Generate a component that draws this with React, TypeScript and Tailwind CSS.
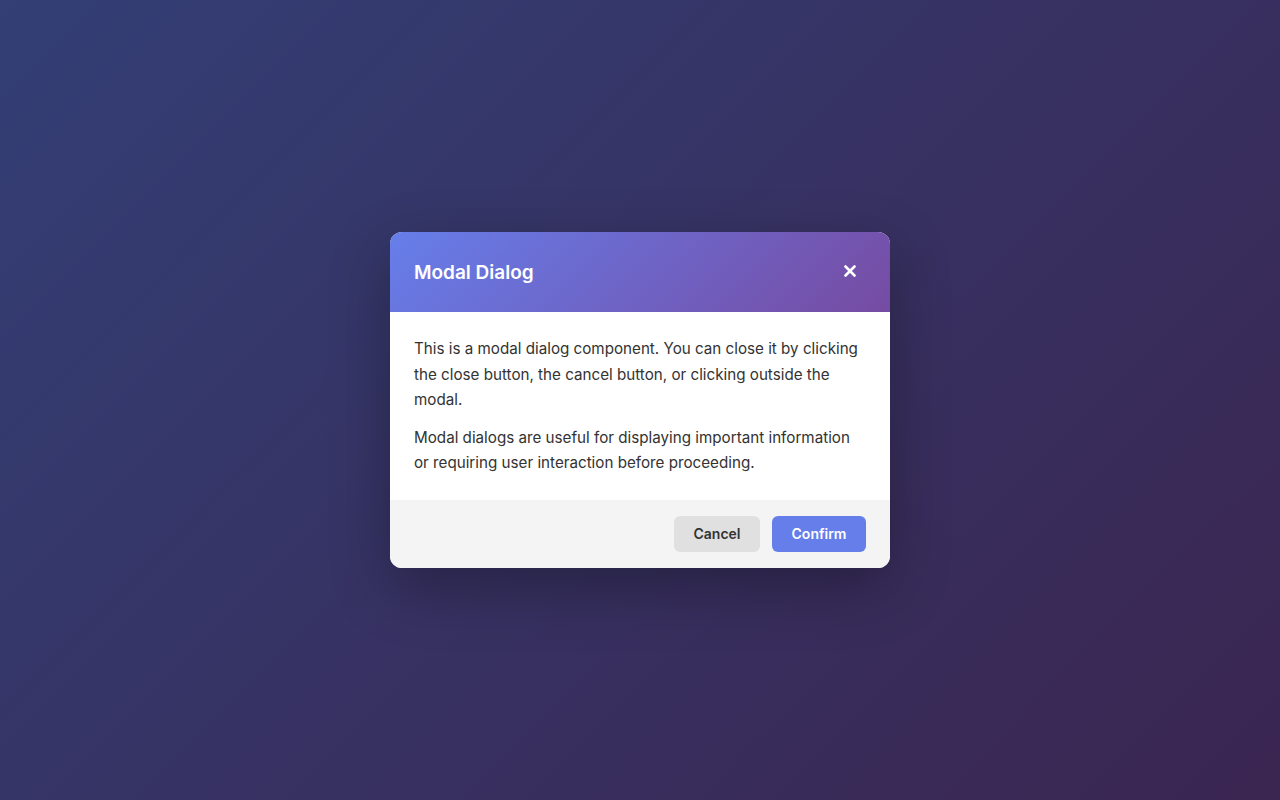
import React from "react";

export default function App() {
  return (
    <div
      className="relative w-full h-[800px] overflow-hidden bg-[linear-gradient(135deg,#667eea_0%,#764ba2_100%)]"
      style={{ fontFamily: "Inter, 'Noto Sans', sans-serif" }}
    >
      <div className="absolute inset-0 bg-black/50 flex items-center justify-center">
        <div className="w-[500px] rounded-xl overflow-hidden bg-white shadow-[0_20px_60px_rgba(0,0,0,0.3)]">
          <div className="h-20 px-6 flex items-center justify-between bg-[linear-gradient(135deg,#667eea_0%,#764ba2_100%)]">
            <h2 className="text-[19px] font-semibold text-white leading-8 mt-0.5">Modal Dialog</h2>
            <button className="w-8 h-8 flex items-center justify-center rounded-md -mt-0.5">
              <svg width="12" height="12" viewBox="0 0 12 12" fill="none">
                <path d="M1.5 1.5L10.5 10.5M10.5 1.5L1.5 10.5" stroke="white" strokeWidth="2.6" strokeLinecap="round" />
              </svg>
            </button>
          </div>
          <div className="p-6 text-[15.2px] leading-[25.5px] text-[#333333]">
            <p className="mb-3">
              This is a modal dialog component. You can close it by clicking the close button, the cancel button, or clicking outside the modal.
            </p>
            <p>
              Modal dialogs are useful for displaying important information or requiring user interaction before proceeding.
            </p>
          </div>
          <div className="h-[68px] px-6 flex items-center justify-end gap-3 bg-[#f4f4f4]">
            <button className="h-9 w-[86px] rounded-md bg-[#e0e0e0] text-[#333333] text-[14px] font-semibold">
              Cancel
            </button>
            <button className="h-9 w-[94px] rounded-md bg-[#667eea] text-white text-[14px] font-semibold">
              Confirm
            </button>
          </div>
        </div>
      </div>
    </div>
  );
}
